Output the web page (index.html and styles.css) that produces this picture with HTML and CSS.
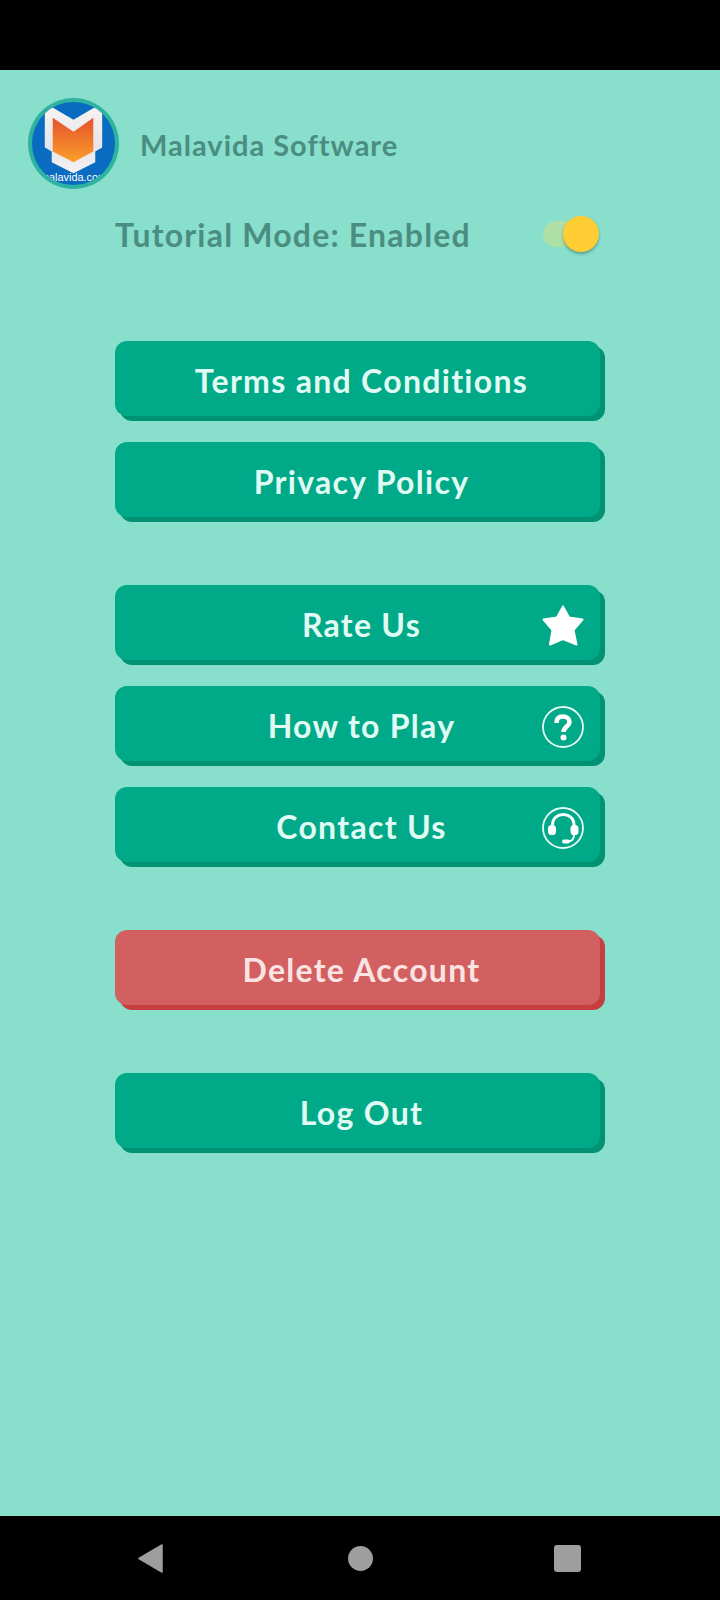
FILE: index.html
```html
<!DOCTYPE html>
<html>
<head>
  <title>Settings</title>
  <link rel="stylesheet" href="styles.css">
</head>
<body>
  <div class="status-bar"></div>

  <div class="screen">
    <!-- Profile -->
    <div class="profile">
      <svg class="avatar" viewBox="0 0 92 92">
        <defs>
          <clipPath id="disc"><circle cx="46" cy="46" r="42"/></clipPath>
          <linearGradient id="shield" x1="0" y1="0" x2="0" y2="1">
            <stop offset="0" stop-color="#e5512c"/>
            <stop offset="1" stop-color="#fb9f2a"/>
          </linearGradient>
          <linearGradient id="frame" x1="0" y1="0" x2="0" y2="1">
            <stop offset="0" stop-color="#f7f3f1"/>
            <stop offset="0.6" stop-color="#e6e4e8"/>
            <stop offset="1" stop-color="#f4f2f4"/>
          </linearGradient>
        </defs>
        <circle cx="46" cy="46" r="46" fill="#2eb3a0"/>
        <circle cx="46" cy="46" r="42" fill="#0a6cc0"/>
        <g clip-path="url(#disc)">
          <path d="M17 13 L24 9 L46 22 L68 9 L75 13 L75 50 L68 54 L68 65 L46 76 L24 65 L24 54 L17 50 Z" fill="url(#frame)"/>
          <path d="M25 20 L46 34 L66 20 L66 54 L46 65 L25 54 Z" fill="url(#shield)"/>
          <text class="avatar-text" x="46" y="84" text-anchor="middle">malavida.com</text>
        </g>
      </svg>
      <span class="profile-name">Malavida Software</span>
    </div>

    <div class="menu">
      <!-- Tutorial toggle -->
      <div class="tutorial">
        <span class="tutorial-label">Tutorial Mode: Enabled</span>
        <div class="toggle">
          <div class="toggle-track"></div>
          <div class="toggle-thumb"></div>
        </div>
      </div>

      <div class="group">
        <button class="btn">Terms and Conditions</button>
        <button class="btn">Privacy Policy</button>
      </div>

      <div class="group">
        <button class="btn">Rate Us
          <svg class="btn-icon" viewBox="0 0 42 42">
            <path d="M21 1.5 L27 12.5 L40.5 14.5 L31.5 25 L34.5 39.5 L21 34 L8 39.5 L10.5 25 L1.5 14.5 L15 12.5 Z" fill="#fff" stroke="#fff" stroke-width="2" stroke-linejoin="round"/>
          </svg>
        </button>
        <button class="btn">How to Play
          <svg class="btn-icon" viewBox="0 0 42 42">
            <circle cx="21" cy="21" r="20" fill="none" stroke="#e6fbf5" stroke-width="1.8"/>
            <path d="M14.5 17 C14.5 11 18 10.5 21 10.5 C25 10.5 27.5 13 27.5 16 C27.5 20.5 21.5 20.5 21.5 26" fill="none" stroke="#fff" stroke-width="4.6"/>
            <circle cx="21.5" cy="31.5" r="3" fill="#fff"/>
          </svg>
        </button>
        <button class="btn">Contact Us
          <svg class="btn-icon" viewBox="0 0 42 42">
            <circle cx="21" cy="21" r="20" fill="none" stroke="#e6fbf5" stroke-width="1.8"/>
            <path d="M10.5 22 V18 C10.5 4 32 4 32 18 V22" fill="none" stroke="#fff" stroke-width="3"/>
            <rect x="6" y="18" width="8" height="10" rx="3.6" fill="#fff"/>
            <rect x="28.5" y="18" width="8" height="10" rx="3.6" fill="#fff"/>
            <path d="M32 28 C32 33 29 34.5 25 34.5" fill="none" stroke="#fff" stroke-width="1.8"/>
            <rect x="20" y="32.4" width="8" height="4" rx="2" fill="#fff"/>
          </svg>
        </button>
      </div>

      <div class="group">
        <button class="btn btn-danger">Delete Account</button>
      </div>

      <div class="group">
        <button class="btn">Log Out</button>
      </div>
    </div>
  </div>

  <!-- Android nav bar -->
  <div class="nav-bar">
    <svg class="nav-back" viewBox="0 0 25 29">
      <path d="M24 1 V28 L1 14.5 Z" fill="#9e9e9e" stroke="#9e9e9e" stroke-width="1.5" stroke-linejoin="round"/>
    </svg>
    <div class="nav-home"></div>
    <div class="nav-recent"></div>
  </div>
</body>
</html>
```

FILE: styles.css
```css
/* Basic reset */
* {
  box-sizing: border-box;
  margin: 0;
  padding: 0;
}

body {
  width: 720px;
  height: 1600px;
  display: flex;
  flex-direction: column;
  font-family: Lato, "Noto Sans", sans-serif;
  background-color: #000000;
  overflow: hidden;
}

.status-bar {
  height: 70px;
  background-color: #000000;
}

.screen {
  height: 1446px;
  background-color: #87dfcc;
  padding: 28px 0 0 28px;
}

/* Profile row */
.profile {
  display: flex;
  align-items: center;
  gap: 21px;
}

.avatar {
  width: 91px;
  height: 91px;
}

.avatar-text {
  font-family: "Liberation Sans", sans-serif;
  font-size: 11px;
  fill: #ffffff;
}

.profile-name {
  font-size: 29px;
  font-weight: 700;
  letter-spacing: 1px;
  color: #4b8d80;
  padding-top: 2px;
}

/* Buttons column */
.menu {
  width: 490px;
  margin-left: 87px;
}

.tutorial {
  display: flex;
  justify-content: space-between;
  align-items: center;
  height: 48px;
  margin-top: 21px;
  padding-right: 6px;
}

.tutorial-label {
  font-size: 32px;
  font-weight: 700;
  letter-spacing: 1.2px;
  color: #4b8d80;
}

.toggle {
  position: relative;
  width: 56px;
  height: 36px;
}

.toggle-track {
  position: absolute;
  left: 0;
  top: 5px;
  width: 44px;
  height: 26px;
  border-radius: 13px;
  background-color: #aedfa5;
}

.toggle-thumb {
  position: absolute;
  right: 0;
  top: 0;
  width: 36px;
  height: 36px;
  border-radius: 50%;
  background-color: #fdcd33;
  box-shadow: 0 2px 3px rgba(0, 0, 0, 0.3);
}

.group {
  display: flex;
  flex-direction: column;
  gap: 26px;
  margin-top: 68px;
}

.tutorial + .group {
  margin-top: 83px;
}

.btn {
  position: relative;
  width: 485px;
  height: 75px;
  padding: 4px 0 0 8px;
  border: none;
  border-radius: 12px;
  font-family: inherit;
  font-size: 32px;
  font-weight: 700;
  letter-spacing: 1.3px;
  color: #e0fbf3;
  background-color: #00a987;
  box-shadow: 5px 5px 0 #009272;
}

.btn-danger {
  color: #fbe3e3;
  background-color: #d26060;
  box-shadow: 5px 5px 0 #c63e3e;
}

/* sits a little below the middle of the button */
.btn-icon {
  position: absolute;
  right: 16px;
  top: 50%;
  width: 42px;
  height: 42px;
  margin-top: -18px;
}

/* Android nav bar */
.nav-bar {
  display: flex;
  align-items: center;
  height: 84px;
  padding-left: 138px;
  background-color: #000000;
}

.nav-back {
  width: 25px;
  height: 29px;
}

.nav-home {
  width: 25px;
  height: 25px;
  margin-left: 185px;
  border-radius: 50%;
  background-color: #9e9e9e;
}

.nav-recent {
  width: 27px;
  height: 27px;
  margin-left: 181px;
  border-radius: 3px;
  background-color: #9e9e9e;
}
```
